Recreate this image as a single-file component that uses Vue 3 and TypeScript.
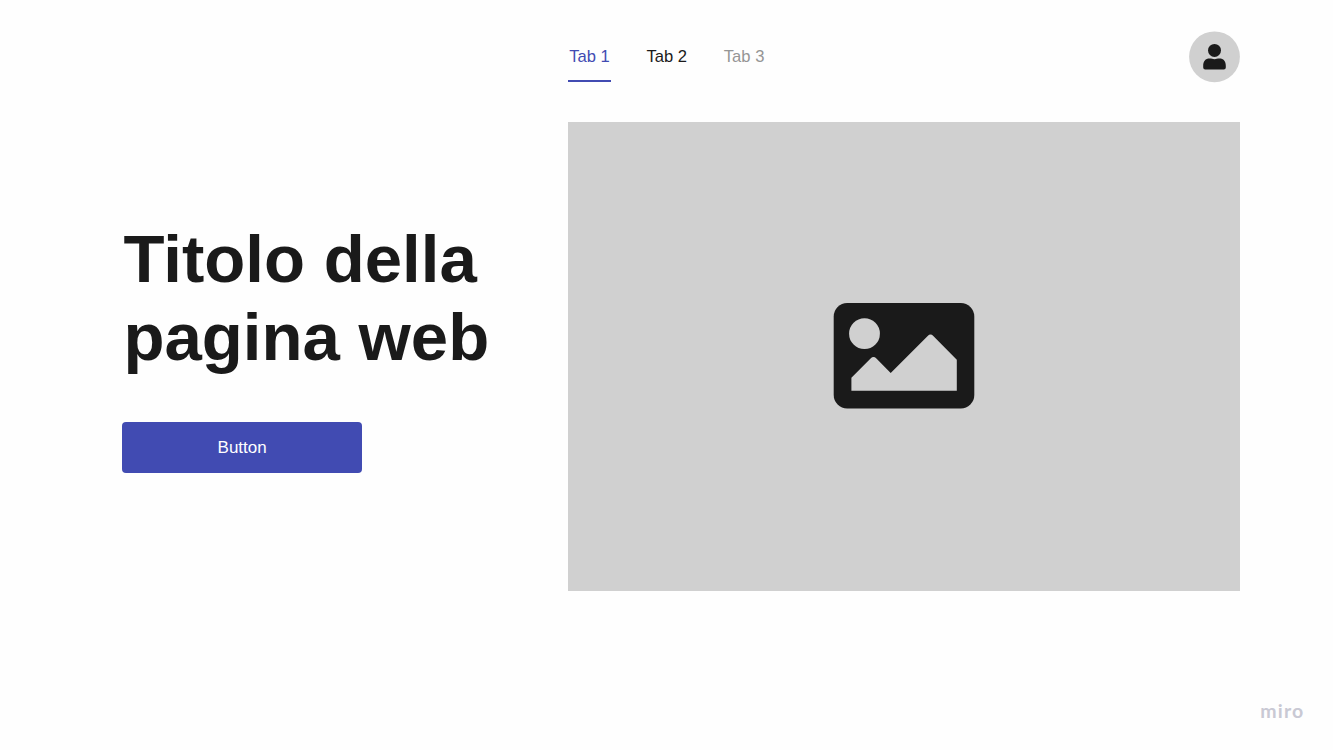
<template>
  <main class="page">
    <section class="intro">
      <h1 class="title">Titolo della<br />pagina web</h1>
      <button class="cta" type="button">Button</button>
    </section>

    <section class="content">
      <header class="topbar">
        <nav class="tabs">
          <button
              v-for="tab in tabs"
              :key="tab.label"
              type="button"
              class="tab"
              :class="{ active: tab.label === activeTab, disabled: tab.disabled }"
              :disabled="tab.disabled"
              @click="activeTab = tab.label"
          >
            {{ tab.label }}
          </button>
        </nav>

        <svg class="avatar" viewBox="0 0 51 51">
          <circle class="avatar-bg" cx="25.5" cy="25.8" r="25.4" />
          <circle cx="25.5" cy="19.4" r="6.5" />
          <path d="M14.2 35C14.2 30.2 16.5 27.6 20.5 27.6C22.8 27.6 23.5 28.3 25.5 28.3C27.5 28.3 28.2 27.6 30.5 27.6C34.5 27.6 36.8 30.2 36.8 35V36.6Q36.8 38.6 34.8 38.6H16.2Q14.2 38.6 14.2 36.6Z" />
        </svg>
      </header>

      <div class="placeholder">
        <svg class="picture" viewBox="0 0 142 106">
          <rect class="frame" x="0.7" width="140.6" height="105.4" rx="13.5" />
          <circle class="cutout" cx="31.5" cy="30.7" r="15.4" />
          <path class="cutout" d="M18.4 87.8V74.8L37.6 55.4Q40.5 52.5 43.4 55.4L57.7 69.9L94.7 33Q97.5 30.2 100.3 33L123.8 56.8V87.8Z" />
        </svg>
      </div>
    </section>

    <footer class="brand">miro</footer>
  </main>
</template>

<script setup lang="ts">
import { ref } from 'vue'

interface Tab {
  label: string
  disabled?: boolean
}

const tabs: Tab[] = [
  { label: 'Tab 1' },
  { label: 'Tab 2' },
  { label: 'Tab 3', disabled: true },
]

const activeTab = ref('Tab 1')
</script>

<style>
body {
  background: #fefefe;
}
</style>

<style scoped>
.page {
  display: grid;
  grid-template-columns: 445.6px 672px;
  grid-template-rows: 1fr auto;
  box-sizing: border-box;
  height: 750px;
  padding: 31px 0 27px 122.4px;
  font-family: "Liberation Sans", Arial, sans-serif;
  color: #1a1a1a;
}

.intro {
  padding-top: 189px;
}

.title {
  margin: 0;
  padding-left: 1px;
  font-size: 67.2px;
  line-height: 78px;
  font-weight: bold;
  white-space: nowrap;
}

.cta {
  display: block;
  width: 239.5px;
  height: 51px;
  margin-top: 46px;
  padding: 0;
  border: none;
  border-radius: 4px;
  background: #414bb2;
  color: white;
  font-family: inherit;
  font-size: 17px;
  cursor: pointer;
}

.topbar {
  display: flex;
  justify-content: space-between;
  height: 51px;
}

.tabs {
  display: flex;
  gap: 34.3px;
}

.tab {
  width: 43px;
  height: 51px;
  padding: 2px 0 0;
  border: none;
  border-bottom: 2px solid transparent;
  background: none;
  color: #1a1a1a;
  font-family: inherit;
  font-size: 16.6px;
  white-space: nowrap;
  cursor: pointer;
}

.tab.active {
  border-color: #414bb2;
  color: #414bb2;
}

.tab.disabled {
  color: #959595;
  cursor: default;
}

.avatar {
  width: 51px;
  height: 51px;
  overflow: visible;
  fill: #1a1a1a;
}

.avatar-bg {
  fill: #d0d0d0;
}

.placeholder {
  display: flex;
  align-items: center;
  justify-content: center;
  height: 468.2px;
  margin-top: 40.4px;
  background: #d0d0d0;
}

.picture {
  width: 142px;
  height: 106px;
}

.frame {
  fill: #1a1a1a;
}

.cutout {
  fill: #d0d0d0;
}

.brand {
  grid-column: 1 / -1;
  justify-self: end;
  margin-right: -64.5px;
  padding-bottom: 1px;
  color: #c9c9d4;
  font-family: Lato, sans-serif;
  font-size: 19.5px;
  line-height: 22px;
  font-weight: bold;
  letter-spacing: 1.2px;
}
</style>
